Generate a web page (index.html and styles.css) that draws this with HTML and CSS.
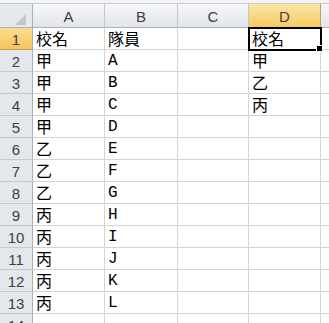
FILE: index.html
```html
<!DOCTYPE html>
<html>
<head>
<meta charset="utf-8">
<link rel="stylesheet" href="styles.css">
</head>
<body>
<div class="sheet">
  <div class="topband"></div>
  <div class="grid">
    <div class="corner"><span class="tri"></span></div>
    <div class="ch">A</div>
    <div class="ch">B</div>
    <div class="ch">C</div>
    <div class="ch sel">D</div>
    <div class="ch last"></div>

    <div class="rh sel">1</div><div class="c">校名</div><div class="c">隊員</div><div class="c"></div><div class="c active">校名<span class="handle"></span></div><div class="c"></div>
    <div class="rh">2</div><div class="c">甲</div><div class="c lat">A</div><div class="c"></div><div class="c">甲</div><div class="c"></div>
    <div class="rh">3</div><div class="c">甲</div><div class="c lat">B</div><div class="c"></div><div class="c">乙</div><div class="c"></div>
    <div class="rh">4</div><div class="c">甲</div><div class="c lat">C</div><div class="c"></div><div class="c">丙</div><div class="c"></div>
    <div class="rh">5</div><div class="c">甲</div><div class="c lat">D</div><div class="c"></div><div class="c"></div><div class="c"></div>
    <div class="rh">6</div><div class="c">乙</div><div class="c lat">E</div><div class="c"></div><div class="c"></div><div class="c"></div>
    <div class="rh">7</div><div class="c">乙</div><div class="c lat">F</div><div class="c"></div><div class="c"></div><div class="c"></div>
    <div class="rh">8</div><div class="c">乙</div><div class="c lat">G</div><div class="c"></div><div class="c"></div><div class="c"></div>
    <div class="rh">9</div><div class="c">丙</div><div class="c lat">H</div><div class="c"></div><div class="c"></div><div class="c"></div>
    <div class="rh">10</div><div class="c">丙</div><div class="c lat">I</div><div class="c"></div><div class="c"></div><div class="c"></div>
    <div class="rh">11</div><div class="c">丙</div><div class="c lat">J</div><div class="c"></div><div class="c"></div><div class="c"></div>
    <div class="rh">12</div><div class="c">丙</div><div class="c lat">K</div><div class="c"></div><div class="c"></div><div class="c"></div>
    <div class="rh">13</div><div class="c">丙</div><div class="c lat">L</div><div class="c"></div><div class="c"></div><div class="c"></div>
    <div class="rh">14</div><div class="c"></div><div class="c"></div><div class="c"></div><div class="c"></div><div class="c"></div>
  </div>
</div>
</body>
</html>
```
FILE: styles.css
```css
html, body {
  margin: 0;
  padding: 0;
  background: #ffffff;
}
.sheet {
  width: 329px;
  height: 323px;
  overflow: hidden;
}
.topband {
  height: 4px;
  background: #f3f4f6;
  border-bottom: 1px solid #c5c9cf;
  box-sizing: border-box;
}
.grid {
  display: grid;
  grid-template-columns: 33px 72px 73px 71px 72px 20px;
  grid-template-rows: 24px repeat(14, 22px);
}
.corner {
  position: relative;
  background: #e5e8ec;
  border-right: 1px solid #a9b0ba;
  border-bottom: 1px solid #a9b0ba;
  box-sizing: border-box;
}
.tri {
  position: absolute;
  right: 6px;
  bottom: 2px;
  width: 0;
  height: 0;
  border-left: 11px solid transparent;
  border-bottom: 11px solid #c3c7cd;
}
.ch {
  background: linear-gradient(#f6f7f9, #e2e5ea);
  border-right: 1px solid #c2c7cf;
  border-bottom: 1px solid #a9b0ba;
  box-sizing: border-box;
  font-family: "Liberation Sans", sans-serif;
  font-size: 15px;
  color: #404040;
  display: flex;
  align-items: center;
  justify-content: center;
  padding-top: 2px;
}
.ch.sel {
  background: linear-gradient(#fce6a8, #f5c960);
  border-right-color: #c2a25a;
  border-bottom-color: #c2a25a;
}
.ch.last {
  border-right: none;
}
.rh {
  background: #e4e7ec;
  border-right: 1px solid #a9b0ba;
  border-bottom: 1px solid #c5cad1;
  box-sizing: border-box;
  font-family: "Liberation Sans", sans-serif;
  font-size: 15px;
  color: #404040;
  display: flex;
  align-items: center;
  justify-content: center;
  padding-top: 2px;
}
.rh.sel {
  background: linear-gradient(#fbdc8e, #f4c65c);
  border-bottom-color: #c2a25a;
}
.c {
  position: relative;
  border-right: 1px solid #d4d4d4;
  border-bottom: 1px solid #d4d4d4;
  box-sizing: border-box;
  font-family: "Noto Sans CJK TC", sans-serif;
  font-size: 16px;
  line-height: 21px;
  color: #000000;
  padding-left: 3px;
  white-space: nowrap;
  overflow: visible;
}
.c.lat {
  font-family: "Liberation Mono", "Noto Sans CJK TC", monospace;
  font-size: 16px;
  padding-top: 1px;
}
.c.active {
  outline: 2px solid #000000;
  outline-offset: -1px;
  z-index: 2;
}
.handle {
  position: absolute;
  right: -3px;
  bottom: -3px;
  width: 5px;
  height: 5px;
  background: #000000;
  border: 1px solid #ffffff;
}
```
